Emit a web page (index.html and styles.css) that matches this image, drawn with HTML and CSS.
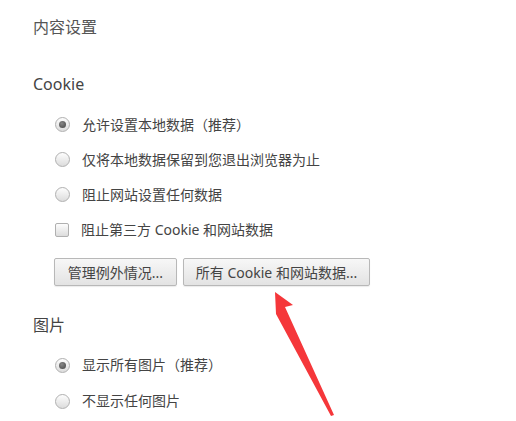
FILE: index.html
```html
<!DOCTYPE html>
<html lang="zh-CN">
<head>
    <meta charset="UTF-8">
    <title>内容设置</title>
    <link rel="stylesheet" href="styles.css">
</head>
<body>
    <div class="page">
        <h1>内容设置</h1>

        <!-- Cookie -->
        <h2>Cookie</h2>
        <div class="options">
            <div class="row"><span class="radio checked"></span>允许设置本地数据（推荐）</div>
            <div class="row"><span class="radio"></span>仅将本地数据保留到您退出浏览器为止</div>
            <div class="row"><span class="radio"></span>阻止网站设置任何数据</div>
            <div class="row"><span class="check"></span>阻止第三方 Cookie 和网站数据</div>
        </div>
        <div class="buttons">
            <button class="btn-first">管理例外情况...</button>
            <button class="btn-second">所有 Cookie 和网站数据...</button>
        </div>

        <!-- 图片 -->
        <h2 class="images">图片</h2>
        <div class="options tall">
            <div class="row"><span class="radio checked"></span>显示所有图片（推荐）</div>
            <div class="row"><span class="radio"></span>不显示任何图片</div>
        </div>
    </div>

    <svg class="arrow" width="516" height="421" viewBox="0 0 516 421">
        <polygon points="275,292 293,305 285,307 334,415 331,416 276,314" fill="#f5373a"/>
    </svg>
</body>
</html>
```

FILE: styles.css
```css
* {
    margin: 0;
    padding: 0;
    box-sizing: border-box;
}

body {
    width: 516px;
    height: 421px;
    overflow: hidden;
    background: #fff;
    font-family: "Noto Sans", "Noto Sans CJK SC", sans-serif;
    color: #444;
}

.page {
    padding: 17px 0 0 33px;
}

h1 {
    font-size: 16px;
    font-weight: normal;
    line-height: 20px;
    color: #555;
    margin-bottom: 37px;
}

h2 {
    font-size: 16px;
    font-weight: normal;
    line-height: 20px;
    color: #444;
}

.options {
    margin-top: 13px;
    padding-left: 22px;
}

.row {
    height: 35px;
    display: flex;
    align-items: center;
    gap: 12px;
    font-size: 14px;
    line-height: 20px;
    white-space: nowrap;
}

.tall .row {
    height: 36px;
}

.radio {
    width: 15px;
    height: 15px;
    border-radius: 50%;
    border: 1px solid #b0b0b0;
    background: linear-gradient(#fdfdfd, #dcdcdc);
    display: flex;
    align-items: center;
    justify-content: center;
    flex-shrink: 0;
}

.radio.checked::after {
    content: "";
    width: 7px;
    height: 7px;
    border-radius: 50%;
    background: radial-gradient(circle at 40% 35%, #888, #444);
}

.check {
    width: 14px;
    height: 14px;
    border: 1px solid #b0b0b0;
    border-radius: 2px;
    background: linear-gradient(#fdfdfd, #dcdcdc);
    flex-shrink: 0;
}

.buttons {
    display: flex;
    gap: 6px;
    margin: 11px 0 0 21px;
}

button {
    height: 28px;
    padding: 0 6px;
    border: 1px solid #b8b8b8;
    border-radius: 2px;
    background: linear-gradient(#f7f7f7, #e3e3e3);
    box-shadow: 0 1px 1px rgba(0, 0, 0, 0.08);
    font-family: "Noto Sans", "Noto Sans CJK SC", sans-serif;
    font-size: 14px;
    color: #444;
    white-space: nowrap;
}

.btn-first {
    width: 123px;
}

.btn-second {
    width: 187px;
}

.images {
    margin-top: 29px;
}

.tall {
    margin-top: 12px;
}

.arrow {
    position: absolute;
    left: 0;
    top: 0;
}
```
